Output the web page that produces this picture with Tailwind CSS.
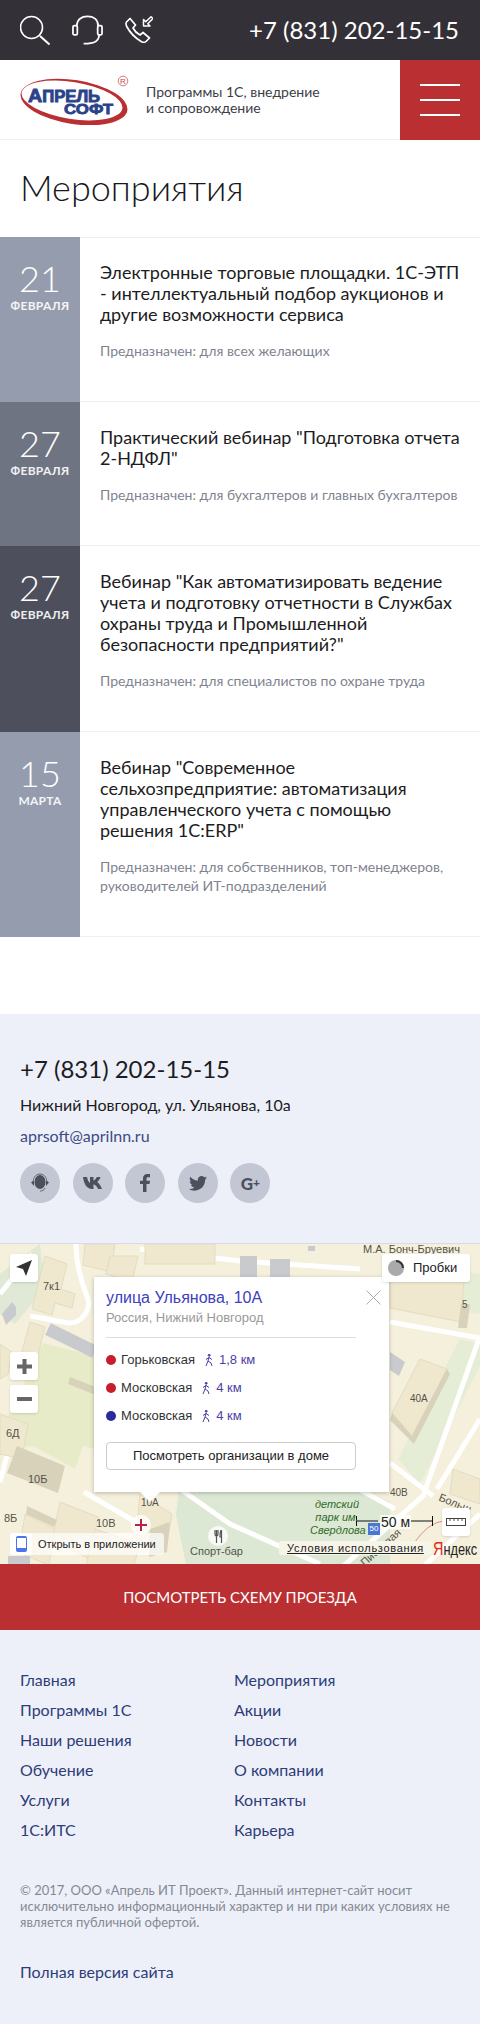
<!DOCTYPE html>
<html lang="ru">
<head>
    <meta charset="UTF-8">
    <meta name="viewport" content="width=device-width, initial-scale=1.0">
    <title>Мероприятия</title>
    <script src="https://cdn.jsdelivr.net/npm/@tailwindcss/browser@4"></script>
</head>
<body class="bg-white font-['Lato',sans-serif] text-[#1c1c22]">
    <!-- top bar -->
    <div class="h-[60px] bg-[#333137] flex items-center justify-between pl-5 pr-[21px] text-white">
        <div class="flex items-center">
            <svg class="w-[32px] h-[32px]" viewBox="0 0 32 32" fill="none" stroke="white" stroke-width="1.6"><circle cx="11.500" cy="13.500" r="11"/><path d="M20 22l9.500 8.500" stroke-width="2"/></svg>
            <svg class="ml-[20px] w-[31px] h-[30px]" viewBox="0 0 32 30" fill="none" stroke="white" stroke-width="1.8"><path d="M5 11C5 4 10 1 16 1s11 3 11 10"/><rect x="1" y="10.500" width="4.500" height="9.500" rx="1.500"/><rect x="26.500" y="10.500" width="4.500" height="9.500" rx="1.500"/><path d="M28 20C28 26 24 29 12 29"/></svg>
            <svg class="ml-[22px] w-[28px] h-[28px]" viewBox="0 0 28 28" fill="none" stroke="white" stroke-width="1.700" stroke-linejoin="round"><path d="M1.500 6l3.500-3.500 5.500 6.500-2.500 3c1.500 3 4 5.500 7 7l3-2.500 6.500 5.500-3.500 3.500c-1 1-2.500 1-4.500.2C11 22.500 5 16.500 1.700 10.500.9 8.500.6 7 1.500 6z"/><path d="M18.500 3.500V10H25l-2.200-2.200L28 2.500 26 .8l-5.200 5z" stroke-width="1.500"/></svg>
        </div>
        <a class="text-[24px] leading-none whitespace-nowrap">+7 (831) 202-15-15</a>
    </div>

    <!-- logo row -->
    <header class="h-[80px] flex items-stretch border-b border-[#eef0f6]">
        <div class="flex-1 flex items-center pl-5">
            <svg class="w-[109px] h-[50px] shrink-0" viewBox="0 0 109 50">
                <ellipse cx="54" cy="27" rx="54" ry="22" transform="rotate(9 54 27)" fill="#b92f32"/>
                <ellipse cx="52" cy="25.500" rx="51" ry="18.500" transform="rotate(9 52 25.500)" fill="white"/>
                <text x="8" y="26.500" font-family="'Liberation Sans',sans-serif" font-weight="700" font-size="16" textLength="72" lengthAdjust="spacingAndGlyphs" fill="#2a4289" stroke="#2a4289" stroke-width=".9"><tspan font-size="19">А</tspan>ПРЕЛЬ</text>
                <text x="44" y="39" font-family="'Liberation Sans',sans-serif" font-weight="700" font-size="15" textLength="49" lengthAdjust="spacingAndGlyphs" fill="#2a4289" stroke="#2a4289" stroke-width=".8">СОФТ</text>
                <circle cx="103" cy="6" r="4.800" fill="white" stroke="#d0585a" stroke-width=".8"/>
                <text x="103" y="9" text-anchor="middle" font-family="'Liberation Sans',sans-serif" font-size="8" fill="#c9474a">R</text>
            </svg>
            <p class="ml-[17px] text-[14px] leading-[16px] text-[#3d3d48]">Программы 1С, внедрение<br>и сопровождение</p>
        </div>
        <button class="w-[80px] h-[80px] bg-[#b92f32] flex flex-col items-center justify-center gap-[13px]">
            <span class="block w-10 h-[2px] bg-white"></span>
            <span class="block w-10 h-[2px] bg-white"></span>
            <span class="block w-10 h-[2px] bg-white"></span>
        </button>
    </header>

    <h1 class="text-[36px] leading-[44px] font-light pl-5 pt-[25px] pb-[28px] text-[#17171d]">Мероприятия</h1>

    <!-- events -->
    <section>
        <article class="flex h-[165px]">
            <div class="w-[80px] shrink-0 bg-[#959cad] text-white text-center pt-[23px]">
                <div class="text-[36px] leading-[36px] font-light">21</div>
                <div class="text-[12px] leading-[16px] font-bold uppercase mt-[2px] opacity-90 tracking-[0.3px]">февраля</div>
            </div>
            <div class="flex-1 border-t border-b border-[#eef0f6] pl-5 pr-4 pt-[24px]">
                <h3 class="text-[18px] leading-[21px]">Электронные торговые площадки. 1С-ЭТП - интеллектуальный подбор аукционов и другие возможности сервиса</h3>
                <p class="mt-4 text-[14px] leading-[19px] text-[#7f838f]">Предназначен: для всех желающих</p>
            </div>
        </article>
        <article class="flex h-[144px]">
            <div class="w-[80px] shrink-0 bg-[#6f7482] text-white text-center pt-[23px]">
                <div class="text-[36px] leading-[36px] font-light">27</div>
                <div class="text-[12px] leading-[16px] font-bold uppercase mt-[2px] opacity-90 tracking-[0.3px]">февраля</div>
            </div>
            <div class="flex-1 border-b border-[#eef0f6] pl-5 pr-3 pt-[25px]">
                <h3 class="text-[18px] leading-[21px]">Практический вебинар "Подготовка отчета 2-НДФЛ"</h3>
                <p class="mt-4 text-[14px] leading-[19px] text-[#7f838f]">Предназначен: для бухгалтеров и главных бухгалтеров</p>
            </div>
        </article>
        <article class="flex h-[186px]">
            <div class="w-[80px] shrink-0 bg-[#4d4f5c] text-white text-center pt-[23px]">
                <div class="text-[36px] leading-[36px] font-light">27</div>
                <div class="text-[12px] leading-[16px] font-bold uppercase mt-[2px] opacity-90 tracking-[0.3px]">февраля</div>
            </div>
            <div class="flex-1 border-b border-[#eef0f6] pl-5 pr-3 pt-[25px]">
                <h3 class="text-[18px] leading-[21px]">Вебинар "Как автоматизировать ведение учета и подготовку отчетности в Службах охраны труда и Промышленной безопасности предприятий?"</h3>
                <p class="mt-4 text-[14px] leading-[19px] text-[#7f838f]">Предназначен: для специалистов по охране труда</p>
            </div>
        </article>
        <article class="flex h-[205px]">
            <div class="w-[80px] shrink-0 bg-[#959cad] text-white text-center pt-[23px]">
                <div class="text-[36px] leading-[36px] font-light">15</div>
                <div class="text-[12px] leading-[16px] font-bold uppercase mt-[2px] opacity-90 tracking-[0.3px]">марта</div>
            </div>
            <div class="flex-1 border-b border-[#eef0f6] pl-5 pr-3 pt-[25px]">
                <h3 class="text-[18px] leading-[21px]">Вебинар "Современное сельхозпредприятие: автоматизация управленческого учета с помощью решения 1С:ERP"</h3>
                <p class="mt-4 text-[14px] leading-[19px] text-[#7f838f]">Предназначен: для собственников, топ-менеджеров, руководителей ИТ-подразделений</p>
            </div>
        </article>
    </section>

    <!-- contacts -->
    <section class="mt-[77px] bg-[#edf0f8] h-[229px] pl-5 pt-[40px]">
        <div class="text-[24px] leading-[30px]">+7 (831) 202-15-15</div>
        <div class="mt-[11px] text-[16px] leading-[20px]">Нижний Новгород, ул. Ульянова, 10а</div>
        <a class="block mt-[11px] text-[16px] leading-[20px] text-[#3c4a85]">aprsoft@aprilnn.ru</a>
        <div class="mt-[17px] flex gap-[12.600px]">
            <span class="w-10 h-10 rounded-full bg-[#c3c6d3] flex items-center justify-center">
                <svg class="w-5 h-[20px]" viewBox="0 0 20 20" fill="#4d4f5c"><ellipse cx="10" cy="9" rx="5.500" ry="7"/><path d="M1 9.500L4 7v6zM19 9.500L16 7v6z"/><path d="M3.500 7C4 3 7 1 10 1s6 2 6.500 6M15 15c-1 2.500-3 3-5 3" fill="none" stroke="#4d4f5c" stroke-width=".8"/></svg>
            </span>
            <span class="w-10 h-10 rounded-full bg-[#c3c6d3] flex items-center justify-center">
                <svg class="w-5 h-3" viewBox="0 0 20 12" fill="#4d4f5c"><path d="M0 0h4c.5 3 1.500 5 3 6V0h3.500v3.500C12 3 13 1.500 14 0h3.500c-.5 2-2 3.800-3.300 5 1.500 1 3.300 3.500 4.800 7h-4c-1-2.500-2.300-4-4.500-4.800V12H9C4 12 .8 7 0 0z"/></svg>
            </span>
            <span class="w-10 h-10 rounded-full bg-[#c3c6d3] flex items-center justify-center">
                <svg class="w-[10px] h-[18px]" viewBox="0 0 10 18" fill="#4d4f5c"><path d="M3 18V10H0V6.800h3V4.500C3 1.500 4.800 0 7.300 0H10v3.200H8c-1 0-1.500.5-1.500 1.500v2.100H10L9.500 10h-3v8z"/></svg>
            </span>
            <span class="w-10 h-10 rounded-full bg-[#c3c6d3] flex items-center justify-center">
                <svg class="w-[18px] h-[15px]" viewBox="0 0 24 20" fill="#4d4f5c"><path d="M24 2.400c-.9.400-1.800.700-2.800.8 1-.6 1.800-1.600 2.200-2.700-1 .6-2 1-3.100 1.200A4.900 4.900 0 0 0 11.900 6.200C7.800 6 4.200 4 1.700.9c-1.300 2.300-.6 5.200 1.500 6.600-.8 0-1.600-.2-2.200-.6 0 2.400 1.700 4.400 3.900 4.900-.7.200-1.500.2-2.200.1.600 2 2.400 3.400 4.600 3.400A9.900 9.900 0 0 1 0 17.300C2.200 18.700 4.800 19.500 7.500 19.500c9.100 0 14.300-7.700 14-14.600 1-.7 1.800-1.500 2.500-2.500z"/></svg>
            </span>
            <span class="w-10 h-10 rounded-full bg-[#c3c6d3] flex items-center justify-center text-[#4d4f5c] text-[17px] font-black leading-none">G<span class="text-[12px]">+</span></span>
        </div>
    </section>

    <!-- map -->
    <div class="relative h-[321px] overflow-hidden bg-[#f5f0dc] border-t border-[#d8dbe6] font-['Liberation_Sans',sans-serif] text-[#55534a]">
        <svg class="absolute inset-0 w-[480px] h-[321px]" viewBox="0 0 480 321">
            <path d="M40 0L0 30v40l15 10L50 38l-8-20z" fill="#dfe9d6"/>
            <path d="M43 99l51 13v93l-11-3-8 23-42-23-33 3v-15l14-30z" fill="#e7ebc8"/>
            <path d="M180 238h170l40 20v63H186l-10-50z" fill="#dce8d3"/>
            <path d="M398 215l62-120 20 5v22l-60 118z" fill="#e6edd7"/>
            <path d="M392 18l88 12v40l-88-10z" fill="#e6edd7"/>
            <!-- roads -->
            <g fill="none" stroke="white" stroke-width="5">
                <path d="M0 50L32 10"/>
                <path d="M76 0c0 25 8 45 12 55 3 10-6 25-20 24L30 72"/>
                <path d="M0 238L10 200"/>
                <path d="M84 248l55 32"/>
                <path d="M140 5l100 12 120 8"/>
                <path d="M390 78l90 16"/>
                <path d="M480 92L423 252 340 325"/>
                <path d="M390 219l43 33"/>
                <path d="M480 175L437 245"/>
                <path d="M480 270L425 321"/>
                <path d="M180 245l50 35 90 40"/>
                <path d="M350 240l45 25"/>
            </g>
            <path d="M48 85L95 108" stroke="#c9cace" stroke-width="13" fill="none"/>
            <!-- buildings -->
            <g fill="#efe8cf" stroke="#e2dcc3" stroke-width="1">
                <path d="M45 12l22 8-6 25 14 5-3 14-17-5-3 12-20-6z"/>
                <path d="M85 0h30l-4 28-28-7z"/>
                <path d="M110 12h28l-6 26-26-8z"/>
                <path d="M30 78l15 5-8 32-16-4z"/>
                <path d="M0 100l12 8-4 22-8 5z"/>
                <path d="M0 170l28 10-6 35-22-5z"/>
                <path d="M25 270l30 15-6 36-30-12z"/>
                <path d="M60 258l38 15-8 42-38-18z"/>
                <path d="M95 285l45 15-6 21h-48z"/>
                <path d="M140 250l32 20-6 35-30-10z"/>
                <path d="M420 115l27 10-35 67-20-23z"/>
                <path d="M453 225l27 10v25l-30-10z"/>
                <path d="M145 0h70v20h-70z"/>
                <path d="M390 20h75l-4 58-71-14z"/>
            </g>
            <g fill="#d8d2bb">
                <path d="M17 202l48 20-7 27-51-20z"/>
                <path d="M27 262l30 14-3 7-28-13z"/>
                <path d="M150 285l20-7-3 30-18 5z"/>
                <path d="M392 169l20 23 35-67 3 5-36 70-24-24z"/>
                <path d="M461 60h9l-3 24h-9z"/>
                <path d="M70 133l28 11v8l-30-12z"/>
            </g>
            <g fill="#c9cace">
                <path d="M2 70l10-12 4 5v8l-10 10z"/>
                <path d="M240 12h17v21h-17zM270 15h20v18h-20zM308 2h7v5h-7z"/>
                <path d="M390 108l15 10-6 14-9-6z"/>
                <path d="M8 312h22v9H8z"/>
            </g>
            <!-- tram line and scale bar -->
            <path d="M410 305c10-15 20-27 35-28" stroke="#d88a93" stroke-width="1" fill="none"/>
            <path d="M356.500 272v10M356 277h22M411 277h22M432.500 272v10" stroke="#111" stroke-width="1" fill="none"/>
        </svg>

        <!-- labels -->
        <span class="absolute left-[43px] top-[37px] text-[11px] leading-none">7к1</span>
        <span class="absolute left-[6px] top-[184px] text-[11px] leading-none">6Д</span>
        <span class="absolute left-[28px] top-[230px] text-[11px] leading-none">10Б</span>
        <span class="absolute left-[4px] top-[269px] text-[11px] leading-none">8Б</span>
        <span class="absolute left-[96px] top-[274px] text-[11px] leading-none">10В</span>
        <span class="absolute left-[141px] top-[254px] text-[10px] leading-none">10А</span>
        <span class="absolute left-[190px] top-[302px] text-[11px] leading-none">Спорт-бар</span>
        <span class="absolute left-[363px] top-[-2px] text-[11px] leading-[14px]">М.А. Бонч-Бруевич</span>
        <span class="absolute left-[462px] top-[56px] text-[10px] leading-none">5</span>
        <span class="absolute left-[410px] top-[150px] text-[10px] leading-none">40А</span>
        <span class="absolute left-[390px] top-[244px] text-[10px] leading-none">40В</span>
        <span class="absolute left-[310px] top-[254px] w-[54px] text-center text-[11px] leading-[13px] italic text-[#2e6b2a]">детский<br>парк им.<br>Свердлова</span>
        <span class="absolute left-[438px] top-[254px] text-[11px] leading-none rotate-[22deg]">Больш</span>
        <span class="absolute left-[356px] top-[298px] text-[11px] leading-none -rotate-[42deg]">Писцовая</span>

        <!-- poi markers -->
        <span class="absolute left-[131px] top-[271px] w-[20px] h-[20px] rounded-full bg-white/80 flex items-center justify-center">
            <svg class="w-[12px] h-[12px]" viewBox="0 0 12 12" fill="#b5234e"><path d="M5 0h2v5h5v2H7v5H5V7H0V5h5z"/></svg>
        </span>
        <span class="absolute left-[208px] top-[282px] w-[20px] h-[20px] rounded-full bg-white/80 flex items-center justify-center">
            <svg class="w-[9px] h-[13px]" viewBox="0 0 9 13" fill="none" stroke="#555" stroke-width="1.200"><path d="M1 0v4c0 1.500 1 2 1.500 2S4 5.500 4 4V0M2.500 0v13M7.500 0C6 1 6 5 6 7h1.500zM7.500 7v6"/></svg>
        </span>
        <span class="absolute left-[368px] top-[279px] w-[12px] h-[12px] bg-[#4a76d4] text-white text-[8px] leading-[12px] text-center">50</span>
        <span class="absolute left-[380px] top-[271px] px-[1px] text-[14px] leading-[14px] text-[#222] bg-white/70">50 м</span>

        <!-- popup -->
        <div class="absolute left-[94px] top-[33px] w-[295px] h-[215px] bg-white shadow-[0_1px_4px_rgba(0,0,0,0.25)] pl-3 pr-[33px] pt-[11px]">
            <div class="text-[16px] leading-[20px] text-[#4040c0]">улица Ульянова, 10А</div>
            <div class="text-[13px] leading-[20px] text-[#999]">Россия, Нижний Новгород</div>
            <svg class="absolute right-[8px] top-[13px] w-[15px] h-[15px]" viewBox="0 0 15 15" stroke="#aaa" stroke-width="1"><path d="M.5.5l14 14M14.500.5l-14 14"/></svg>
            <div class="mt-[9px] w-[250px] border-t border-[#ddd] pt-[8px] text-[13px] text-[#333]">
                <div class="flex items-center h-[28px]"><span class="w-[10px] h-[10px] rounded-full bg-[#c81d2b] mr-[5px]"></span>Горьковская
                    <svg class="ml-[10px] mr-[6px] w-[8px] h-[12px]" viewBox="0 0 8 12" fill="none" stroke="#4b3fa8" stroke-width="1"><circle cx="4.200" cy="1.200" r="1" fill="#4b3fa8"/><path d="M4 3L3 7l3 2 1 3M3 7l-2 5M4 3.500L1 5.500M4 3.500l3 2"/></svg>
                    <span class="text-[#4b3fa8]">1,8 км</span></div>
                <div class="flex items-center h-[28px]"><span class="w-[10px] h-[10px] rounded-full bg-[#c81d2b] mr-[5px]"></span>Московская
                    <svg class="ml-[10px] mr-[6px] w-[8px] h-[12px]" viewBox="0 0 8 12" fill="none" stroke="#4b3fa8" stroke-width="1"><circle cx="4.200" cy="1.200" r="1" fill="#4b3fa8"/><path d="M4 3L3 7l3 2 1 3M3 7l-2 5M4 3.500L1 5.500M4 3.500l3 2"/></svg>
                    <span class="text-[#4b3fa8]">4 км</span></div>
                <div class="flex items-center h-[28px]"><span class="w-[10px] h-[10px] rounded-full bg-[#2b2b9c] mr-[5px]"></span>Московская
                    <svg class="ml-[10px] mr-[6px] w-[8px] h-[12px]" viewBox="0 0 8 12" fill="none" stroke="#4b3fa8" stroke-width="1"><circle cx="4.200" cy="1.200" r="1" fill="#4b3fa8"/><path d="M4 3L3 7l3 2 1 3M3 7l-2 5M4 3.500L1 5.500M4 3.500l3 2"/></svg>
                    <span class="text-[#4b3fa8]">4 км</span></div>
            </div>
            <button class="mt-[12px] w-[250px] h-[28px] border border-[#ccc] rounded-[4px] text-[13px] text-[#222]">Посмотреть организации в доме</button>
        </div>
        <span class="absolute left-[140px] top-[248px] w-0 h-0 border-x-[10px] border-x-transparent border-t-[10px] border-t-white"></span>

        <!-- map controls -->
        <button class="absolute left-[10px] top-[10px] w-[28px] h-[28px] bg-white rounded-[3px] shadow-sm flex items-center justify-center">
            <svg class="w-[16px] h-[16px]" viewBox="0 0 16 16" fill="#333"><path d="M16 0L0 7l7 2 3 7z"/></svg>
        </button>
        <button class="absolute left-[10px] top-[108px] w-[28px] h-[28px] bg-white rounded-[3px] shadow-sm flex items-center justify-center">
            <svg class="w-[15px] h-[15px]" viewBox="0 0 15 15" fill="#666"><path d="M5.500 0h4v5.500H15v4H9.500V15h-4V9.500H0v-4h5.500z"/></svg>
        </button>
        <button class="absolute left-[10px] top-[141px] w-[28px] h-[28px] bg-white rounded-[3px] shadow-sm flex items-center justify-center">
            <span class="block w-[15px] h-[4px] bg-[#666]"></span>
        </button>
        <button class="absolute left-[382px] top-[10px] w-[88px] h-[28px] bg-white rounded-[3px] shadow-sm flex items-center pl-[6px] text-[13px] text-[#222]">
            <svg class="w-[16px] h-[16px] mr-[9px]" viewBox="0 0 16 16"><circle cx="8" cy="8" r="8" fill="#aaa"/><path d="M8 0a8 8 0 0 1 8 8h-2a6 6 0 0 0-6-6z" fill="#333"/></svg>Пробки
        </button>
        <button class="absolute left-[442px] top-[264px] w-[28px] h-[28px] bg-white rounded-[3px] shadow-sm flex items-center justify-center">
            <svg class="w-[20px] h-[8px]" viewBox="0 0 20 8" fill="none" stroke="#444" stroke-width="1"><rect x=".5" y=".5" width="19" height="7"/><path d="M4 1v2M8 1v2M12 1v2M16 1v2"/></svg>
        </button>
        <div class="absolute left-[10px] top-[289px] h-[22px] flex items-center bg-white/70 rounded-[3px] pr-2 text-[11px] text-[#222]">
            <span class="w-[22px] h-[22px] bg-white rounded-[3px] flex items-center justify-center mr-[6px]">
                <svg class="w-[11px] h-[16px]" viewBox="0 0 11 16"><rect width="11" height="16" rx="2" fill="#4a76e8"/><rect x="1" y="2" width="9" height="10" fill="white"/></svg>
            </span>Открыть в приложении
        </div>
        <span class="absolute left-[279px] top-[297px] px-2 h-[14px] bg-[#f7f4e8] rounded-[2px] text-[11px] leading-[14px] underline text-[#222] tracking-[0.7px]">Условия использования</span>
        <span class="absolute left-[433px] top-[296px] text-[16px] leading-[18px] origin-left scale-x-[0.8] whitespace-nowrap text-[#222]"><span class="text-[#e0281c] text-[18px]">Я</span>ндекс</span>
    </div>

    <!-- route button -->
    <a class="block h-[66px] bg-[#b92f32] text-white text-center uppercase text-[15px] leading-[66px]">Посмотреть схему проезда</a>

    <!-- footer -->
    <footer class="bg-[#edf0f8] h-[394px] px-5 pt-[35px] text-[#2e3d78]">
        <div class="grid grid-cols-2 w-[428px] text-[16px] leading-[30px]">
            <a>Главная</a><a>Мероприятия</a>
            <a>Программы 1С</a><a>Акции</a>
            <a>Наши решения</a><a>Новости</a>
            <a>Обучение</a><a>О компании</a>
            <a>Услуги</a><a>Контакты</a>
            <a>1С:ИТС</a><a>Карьера</a>
        </div>
        <p class="mt-[37px] text-[13px] leading-[16px] text-[#858993]">© 2017, ООО «Апрель ИТ Проект». Данный интернет-сайт носит исключительно информационный характер и ни при каких условиях не является публичной офертой.</p>
        <a class="block mt-[27px] text-[16px] leading-[30px]">Полная версия сайта</a>
    </footer>
</body>
</html>
